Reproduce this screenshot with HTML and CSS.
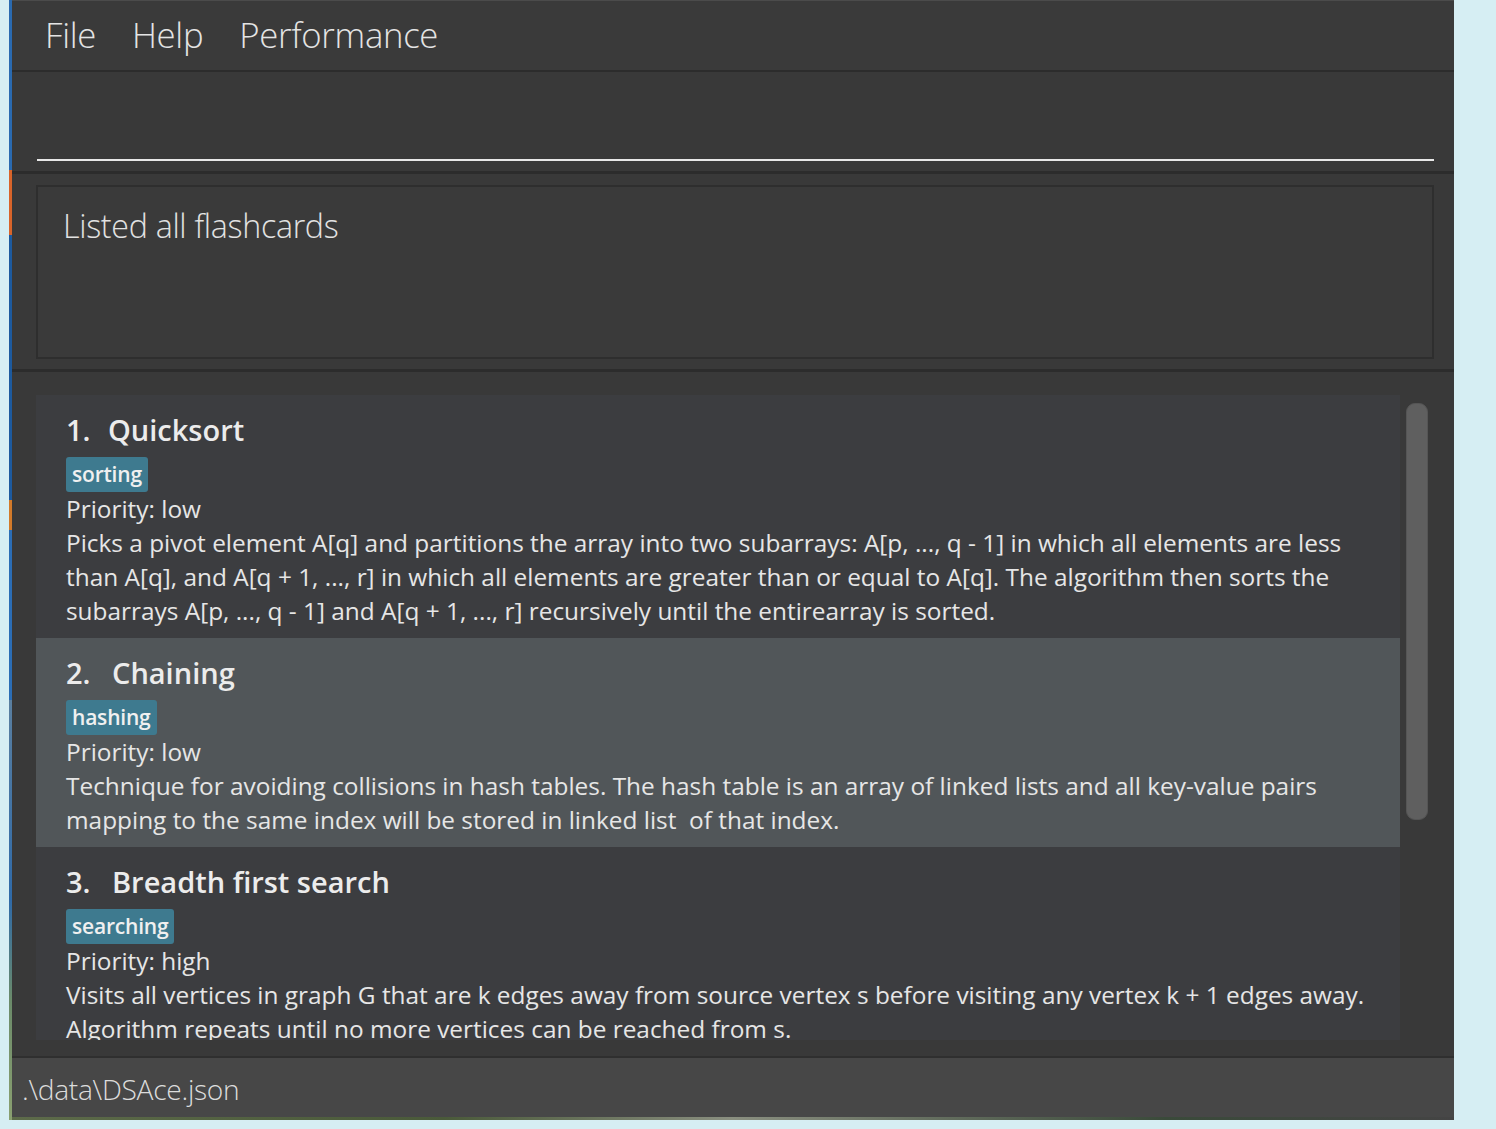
FILE: index.html
```html
<!DOCTYPE html>
<html>
<head>
<meta charset="utf-8">
<title>DSAce</title>
<link rel="stylesheet" href="styles.css">
</head>
<body>
<div class="desktop">
  <div class="desk-strip"></div>
  <div class="window">
    <div class="menubar">
      <span class="menu-item">File</span>
      <span class="menu-item">Help</span>
      <span class="menu-item">Performance</span>
    </div>
    <div class="command-pane">
      <div class="command-line"></div>
    </div>
    <div class="result-pane">
      <div class="result-box">Listed all flashcards</div>
    </div>
    <div class="list-pane">
      <div class="list">
        <div class="cell">
          <div class="title"><span class="idx">1.</span><span class="name">Quicksort</span></div>
          <div class="tags"><span class="tag">sorting</span></div>
          <div class="line">Priority: low</div>
          <div class="desc">Picks a pivot element A[q] and partitions the array into two subarrays: A[p, ..., q - 1] in which all elements are less than A[q], and A[q + 1, ..., r] in which all elements are greater than or equal to A[q]. The algorithm then sorts the subarrays A[p, ..., q - 1] and A[q + 1, ..., r] recursively until the entirearray is sorted.</div>
        </div>
        <div class="cell selected">
          <div class="title"><span class="idx idx-wide">2.</span><span class="name">Chaining</span></div>
          <div class="tags"><span class="tag">hashing</span></div>
          <div class="line">Priority: low</div>
          <div class="desc">Technique for avoiding collisions in hash tables. The hash table is an array of linked lists and all key-value pairs mapping to the same index will be stored in linked list&nbsp; of that index.</div>
        </div>
        <div class="cell">
          <div class="title"><span class="idx idx-wide">3.</span><span class="name">Breadth first search</span></div>
          <div class="tags"><span class="tag">searching</span></div>
          <div class="line">Priority: high</div>
          <div class="desc">Visits all vertices in graph G that are k edges away from source vertex s before visiting any vertex k + 1 edges away. Algorithm repeats until no more vertices can be reached from s.</div>
        </div>
      </div>
      <div class="scrollbar"><div class="thumb"></div></div>
    </div>
    <div class="statusbar">.\data\DSAce.json</div>
  </div>
</div>
</body>
</html>
```
FILE: styles.css
```css
html, body {
  margin: 0;
  padding: 0;
}
body {
  background: #d6eef3;
  width: 1496px;
  height: 1129px;
  overflow: hidden;
  font-family: "Open Sans", "Noto Sans", sans-serif;
}
.desktop {
  display: flex;
  padding-left: 9px;
  height: 1120px;
}
.desk-strip {
  width: 3px;
  height: 1120px;
  background: linear-gradient(to bottom,
    #2a6ab0 0, #2a6ab0 170px, #d8642a 170px, #d8642a 235px, #1d5a9e 235px,
    #1d5a9e 500px, #d27a2a 500px, #d27a2a 530px, #2b6db5 530px, #2b6db5 700px,
    #5a7fa0 700px, #2f6aa8 900px, #6b8b6a 1000px, #8aa070 1120px);
}
.window {
  width: 1442px;
  height: 1120px;
  display: flex;
  flex-direction: column;
  background: #383838;
  box-shadow: inset -2px 0 0 #2e2e2e;
}
.menubar {
  height: 72px;
  flex: none;
  background: #3a3a3a;
  border-top: 1px solid #4b4b4b;
  border-bottom: 2px solid #2c2c2c;
  box-sizing: border-box;
  display: flex;
  align-items: center;
  padding-left: 33px;
  gap: 36px;
}
.menu-item {
  font-family: "Open Sans", sans-serif;
  font-weight: 300;
  font-size: 34.7px;
  color: #e4e4e4;
  letter-spacing: -0.3px;
  position: relative;
  top: -1px;
}
.command-pane {
  height: 102px;
  flex: none;
  background: #393939;
  border-bottom: 3px solid #2c2c2c;
  box-sizing: border-box;
  padding: 87px 20px 0 25px;
}
.command-line {
  height: 2px;
  background: #e8e8e8;
}
.result-pane {
  height: 198px;
  flex: none;
  background: #393939;
  border-bottom: 3px solid #2c2c2c;
  box-sizing: border-box;
  padding: 11px 20px 0 24px;
}
.result-box {
  height: 174px;
  box-sizing: border-box;
  border: 2px solid #2e2e2e;
  background: #3a3a3a;
  font-weight: 300;
  font-size: 32.2px;
  color: #e2e2e2;
  padding: 17px 0 0 25px;
  letter-spacing: -0.3px;
}
.list-pane {
  height: 686px;
  flex: none;
  background: #393939;
  border-bottom: 2px solid #2f2f2f;
  box-sizing: border-box;
  padding: 23px 0 0 24px;
  display: flex;
  overflow: hidden;
}
.list {
  width: 1364px;
  height: 645px;
  overflow: hidden;
  background: #3c3d40;
  flex: none;
}
.cell {
  background: #3c3d40;
  padding: 14px 10px 10px 30px;
  color: #e8e8e8;
}
.cell.selected {
  background: #515659;
}
.title {
  height: 42px;
  line-height: 42px;
  font-size: 29px;
  font-weight: 600;
  color: #ececec;
  display: flex;
}
.idx {
  width: 42px;
}
.idx-wide {
  width: 46px;
}
.tags {
  margin-top: 6px;
  height: 35px;
  display: flex;
}
.tag {
  background: #3e7a8f;
  color: #f0f0f0;
  font-size: 21px;
  font-weight: 600;
  line-height: 35px;
  padding: 0 6px;
  border-radius: 3px;
  letter-spacing: -0.2px;
}
.line, .desc {
  font-size: 24.4px;
  line-height: 34px;
  color: #e6e6e6;
}
.scrollbar {
  width: 30px;
  padding: 8px 0 0 6px;
  box-sizing: border-box;
}
.thumb {
  width: 22px;
  height: 417px;
  background: #5f5f5f;
  border: 1px solid #555;
  box-sizing: border-box;
  border-radius: 9px;
}
.statusbar {
  height: 59px;
  flex: none;
  background: #474747;
  font-weight: 300;
  font-size: 28.2px;
  line-height: 62px;
  color: #dcdcdc;
  padding-left: 10px;
  letter-spacing: -0.3px;
}
.window::after {
  content: "";
  display: block;
  flex: none;
  height: 3px;
  background: linear-gradient(to right, #5d6b4a, #4a5a3a 30%, #8a8f80 50%, #3a4a3a 80%, #444 100%);
}
```
